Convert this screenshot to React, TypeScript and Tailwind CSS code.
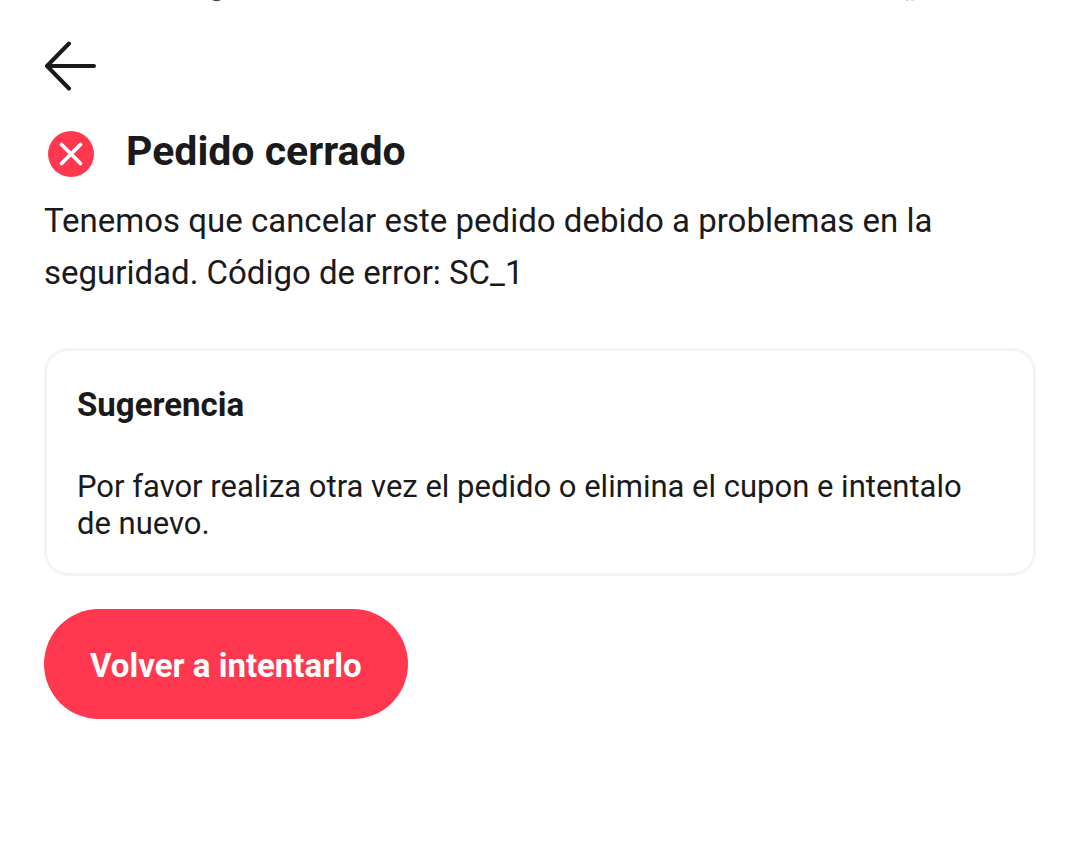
import React from 'react';

interface ErrorNoticeProps {
    title: string;
    message: string;
}

function BackIcon() {
    return (
        <svg width="52" height="50" viewBox="0 0 52 50" fill="none" stroke="#1a1a1a" strokeWidth="4" strokeLinecap="round" strokeLinejoin="round">
            <path d="M25 2.5 3 25 25 47.5M3 25H50" />
        </svg>
    );
}

function ErrorIcon() {
    return (
        <svg width="46" height="46" viewBox="0 0 46 46" fill="none">
            <circle cx="23" cy="23" r="23" fill="#ff3850" />
            <path d="M13.5 13.5 32.5 32.5M32.5 13.5 13.5 32.5" stroke="#fff" strokeWidth="3.8" strokeLinecap="round" />
        </svg>
    );
}

// Lower edge of the status bar glyphs that scroll out of view
function StatusBarEdge() {
    return (
        <div className="flex h-0.5 justify-between pr-[165px] pl-[211px]" aria-hidden="true">
            <svg width="11" height="2" viewBox="0 0 11 2">
                <path d="M1 0H10Q5.500 2.400 1 0Z" fill="#4a4a4a" />
            </svg>
            <svg width="10" height="2" viewBox="0 0 10 2">
                <path d="M1 0H4M6 0H9" stroke="#d8d8d8" strokeWidth="2" />
            </svg>
        </div>
    );
}

function ErrorNotice({ title, message }: ErrorNoticeProps) {
    return (
        <section>
            <div className="flex items-end gap-8 pl-1">
                <ErrorIcon />
                <h1 className="text-[41px] leading-[52px] font-bold">{title}</h1>
            </div>
            <p className="mt-[18px] text-[33px] leading-[52px]">{message}</p>
        </section>
    );
}

export default function App() {
    return (
        <div className="min-h-screen bg-white font-['Roboto',sans-serif] text-[#1a1a1a]">
            <StatusBarEdge />
            <main className="px-11 pt-[39px] pb-8">
                <button type="button" aria-label="Volver" className="block">
                    <BackIcon />
                </button>
                <div className="mt-[34px]">
                    <ErrorNotice
                        title="Pedido cerrado"
                        message="Tenemos que cancelar este pedido debido a problemas en la seguridad. Código de error: SC_1"
                    />
                </div>
                <section className="mt-[49px] rounded-3xl border-3 border-[#f4f4f4] px-[30px] pt-8 pb-[31px]">
                    <h2 className="text-[33px] leading-[44px] font-bold">Sugerencia</h2>
                    <p className="mt-[41px] text-[31px] leading-[37px]">
                        Por favor realiza otra vez el pedido o elimina el cupon e intentalo de nuevo.
                    </p>
                </section>
                <button type="button" className="mt-[33px] h-[110px] rounded-full bg-[#ff3850] px-[46px] pt-1 text-[33px] font-bold text-white">
                    Volver a intentarlo
                </button>
            </main>
        </div>
    );
}
